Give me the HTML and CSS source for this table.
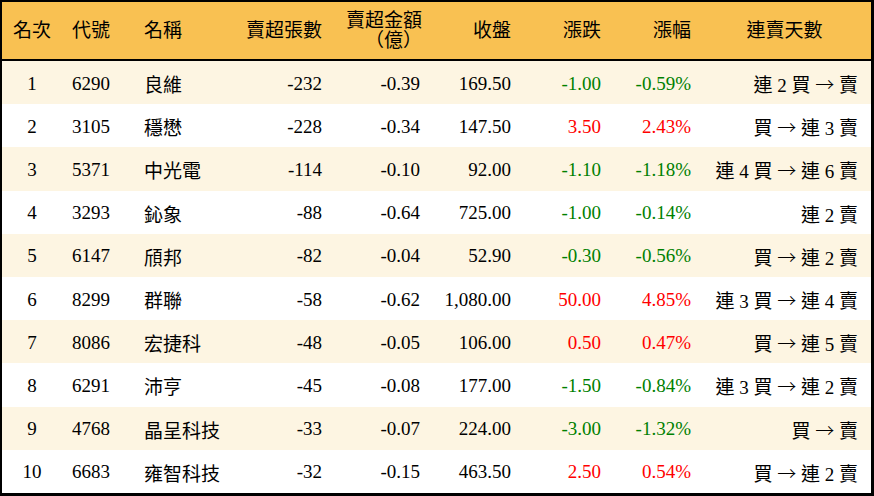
FILE: index.html
```html
<!DOCTYPE html>
<html lang="zh-Hant">
<head>
<meta charset="utf-8">
<link rel="stylesheet" href="styles.css">
</head>
<body>
<table class="rank">
  <colgroup>
    <col class="w1"><col class="w2"><col class="w3"><col class="w4"><col class="w5"><col class="w6"><col class="w7"><col class="w8"><col class="w9">
  </colgroup>
  <thead>
    <tr>
      <th class="c">名次</th>
      <th class="l">代號</th>
      <th class="l">名稱</th>
      <th class="r">賣超張數</th>
      <th class="r two">賣超金額<br><span class="sub"><span class="po">（</span>億<span class="pc">）</span></span></th>
      <th class="r">收盤</th>
      <th class="r">漲跌</th>
      <th class="r">漲幅</th>
      <th class="c last">連賣天數</th>
    </tr>
  </thead>
  <tbody>
    <tr><td class="c">1</td><td class="l">6290</td><td class="l">良維</td><td class="r">-232</td><td class="r">-0.39</td><td class="r">169.50</td><td class="r dn">-1.00</td><td class="r dn">-0.59%</td><td class="r last">連 2 買 <span class="ar">→</span> 賣</td></tr>
    <tr><td class="c">2</td><td class="l">3105</td><td class="l">穩懋</td><td class="r">-228</td><td class="r">-0.34</td><td class="r">147.50</td><td class="r up">3.50</td><td class="r up">2.43%</td><td class="r last">買 <span class="ar">→</span> 連 3 賣</td></tr>
    <tr><td class="c">3</td><td class="l">5371</td><td class="l">中光電</td><td class="r">-114</td><td class="r">-0.10</td><td class="r">92.00</td><td class="r dn">-1.10</td><td class="r dn">-1.18%</td><td class="r last">連 4 買 <span class="ar">→</span> 連 6 賣</td></tr>
    <tr><td class="c">4</td><td class="l">3293</td><td class="l">鈊象</td><td class="r">-88</td><td class="r">-0.64</td><td class="r">725.00</td><td class="r dn">-1.00</td><td class="r dn">-0.14%</td><td class="r last">連 2 賣</td></tr>
    <tr><td class="c">5</td><td class="l">6147</td><td class="l">頎邦</td><td class="r">-82</td><td class="r">-0.04</td><td class="r">52.90</td><td class="r dn">-0.30</td><td class="r dn">-0.56%</td><td class="r last">買 <span class="ar">→</span> 連 2 賣</td></tr>
    <tr><td class="c">6</td><td class="l">8299</td><td class="l">群聯</td><td class="r">-58</td><td class="r">-0.62</td><td class="r">1,080.00</td><td class="r up">50.00</td><td class="r up">4.85%</td><td class="r last">連 3 買 <span class="ar">→</span> 連 4 賣</td></tr>
    <tr><td class="c">7</td><td class="l">8086</td><td class="l">宏捷科</td><td class="r">-48</td><td class="r">-0.05</td><td class="r">106.00</td><td class="r up">0.50</td><td class="r up">0.47%</td><td class="r last">買 <span class="ar">→</span> 連 5 賣</td></tr>
    <tr><td class="c">8</td><td class="l">6291</td><td class="l">沛亨</td><td class="r">-45</td><td class="r">-0.08</td><td class="r">177.00</td><td class="r dn">-1.50</td><td class="r dn">-0.84%</td><td class="r last">連 3 買 <span class="ar">→</span> 連 2 賣</td></tr>
    <tr><td class="c">9</td><td class="l">4768</td><td class="l">晶呈科技</td><td class="r">-33</td><td class="r">-0.07</td><td class="r">224.00</td><td class="r dn">-3.00</td><td class="r dn">-1.32%</td><td class="r last">買 <span class="ar">→</span> 賣</td></tr>
    <tr><td class="c">10</td><td class="l">6683</td><td class="l">雍智科技</td><td class="r">-32</td><td class="r">-0.15</td><td class="r">463.50</td><td class="r up">2.50</td><td class="r up">0.54%</td><td class="r last">買 <span class="ar">→</span> 連 2 賣</td></tr>
  </tbody>
</table>
</body>
</html>
```

FILE: styles.css
```css
html, body {
  margin: 0;
  padding: 0;
  background: #ffffff;
}

.rank {
  width: 874px;
  height: 496px;
  border-collapse: separate;
  border-spacing: 0;
  table-layout: fixed;
  box-sizing: border-box;
  border-style: solid;
  border-color: #000;
  border-width: 2px 3px 3px 2px;
  font-family: "Liberation Serif", "Noto Sans CJK TC", serif;
  font-size: 19px;
  color: #000;
}

.w1 { width: 60px; }
.w2 { width: 72px; }
.w3 { width: 98px; }
.w4 { width: 100px; }
.w5 { width: 98px; }
.w6 { width: 91px; }
.w7 { width: 90px; }
.w8 { width: 90px; }
.w9 { width: 170px; }

.rank th {
  height: 59px;
  background: #f9c152;
  font-weight: normal;
  padding: 0 10px;
  border-bottom: 2px solid #000;
  line-height: 20px;
  vertical-align: middle;
  box-sizing: border-box;
}

.rank th.two {
  padding-top: 1px;
  padding-right: 8px;
}

.rank th .sub {
  display: inline-block;
  white-space: nowrap;
}

.po, .pc {
  display: inline-block;
  width: 19px;
}

.po { text-align: right; }
.pc { text-align: left; }

.rank td {
  height: 43px;
  padding: 2px 10px 0;
  vertical-align: middle;
  white-space: nowrap;
  box-sizing: border-box;
}

.rank tbody tr:nth-child(odd) td {
  background: #fdf5e2;
}

.rank tbody tr:nth-child(even) td {
  background: #ffffff;
}

.c { text-align: center; }
.l { text-align: left; }
.r { text-align: right; }

.rank .last {
  padding-right: 13px;
}

.rank th.last {
  padding-left: 10px;
  padding-right: 13px;
  text-align: center;
}

.ar {
  font-family: "Noto Sans CJK TC", "DejaVu Sans", sans-serif;
  font-weight: 300;
}

.up { color: #ff0000; }
.dn { color: #008000; }
```
